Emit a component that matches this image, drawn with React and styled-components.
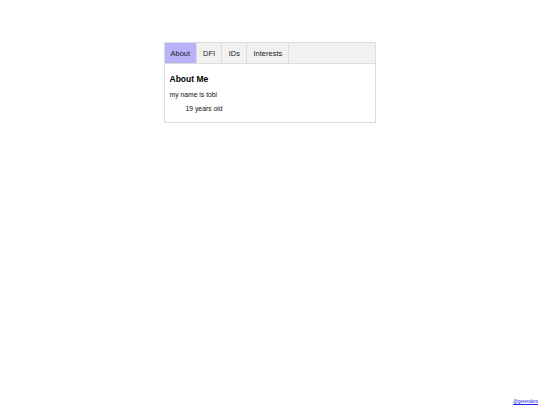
import React, {useState} from 'react';
import styled, {createGlobalStyle} from 'styled-components';

const GlobalStyle = createGlobalStyle`
    html, body {
        margin: 0;
        padding: 0;
        background: #ffffff;
        font-family: "Liberation Sans", Arial, sans-serif;
        color: #111;
    }
`

const Page = styled.div`
    min-height: 405px;
    display: flex;
    flex-direction: column;
    align-items: center;
    padding-top: 42px;
    box-sizing: border-box;
`

const Card = styled.div`
    width: 212px;
    margin-right: 1px;
    border: 1px solid #dcdcdc;
    box-sizing: border-box;
    background: #fff;
`

const TabBar = styled.div`
    display: flex;
    height: 20px;
    background: #f1f1f1;
    border-bottom: 1px solid #dcdcdc;
`

const Tab = styled.button`
    border: none;
    border-right: 1px solid #dcdcdc;
    background: ${props => props.$active ? '#b8b3f8' : 'transparent'};
    padding: 0 ${props => props.$pad}px;
    font-family: inherit;
    font-size: 7.5px;
    font-weight: normal;
    color: #222;
    cursor: pointer;
    margin: 0;
`

const Panel = styled.div`
    padding: 10px 5px 10px 5px;
`

const Heading = styled.h3`
    margin: 0 0 7px;
    font-size: 8.5px;
    font-weight: bold;
    color: #000;
`

const Line = styled.p`
    margin: 0 0 ${props => props.$mb || 0}px;
    padding-left: ${props => props.$indent || 0}px;
    font-size: 6.8px;
`

const Footer = styled.div`
    margin-top: auto;
    align-self: flex-end;
    padding: 0 2px 1px 0;
    font-size: 4.5px;
`

const Link = styled.a`
    color: #2222ee;
`

const tabs = [
    {name: 'About', pad: 6},
    {name: 'DFI', pad: 6},
    {name: 'IDs', pad: 6.5},
    {name: 'Interests', pad: 6},
]

function App()
{
    const [active, setActive] = useState('About')

    return (
        <>
            <GlobalStyle />
            <Page>
                <Card>
                    <TabBar>
                        {tabs.map(t => (
                            <Tab key={t.name} $pad={t.pad} $active={active === t.name} onClick={() => setActive(t.name)}>
                                {t.name}
                            </Tab>
                        ))}
                    </TabBar>
                    <Panel>
                        <Heading>About Me</Heading>
                        <Line $mb={7}>my name is tobi</Line>
                        <Line $indent={16}>19 years old</Line>
                    </Panel>
                </Card>
                <Footer>
                    <Link href="#">@gerenders</Link>
                </Footer>
            </Page>
        </>
    )
}

export default App
